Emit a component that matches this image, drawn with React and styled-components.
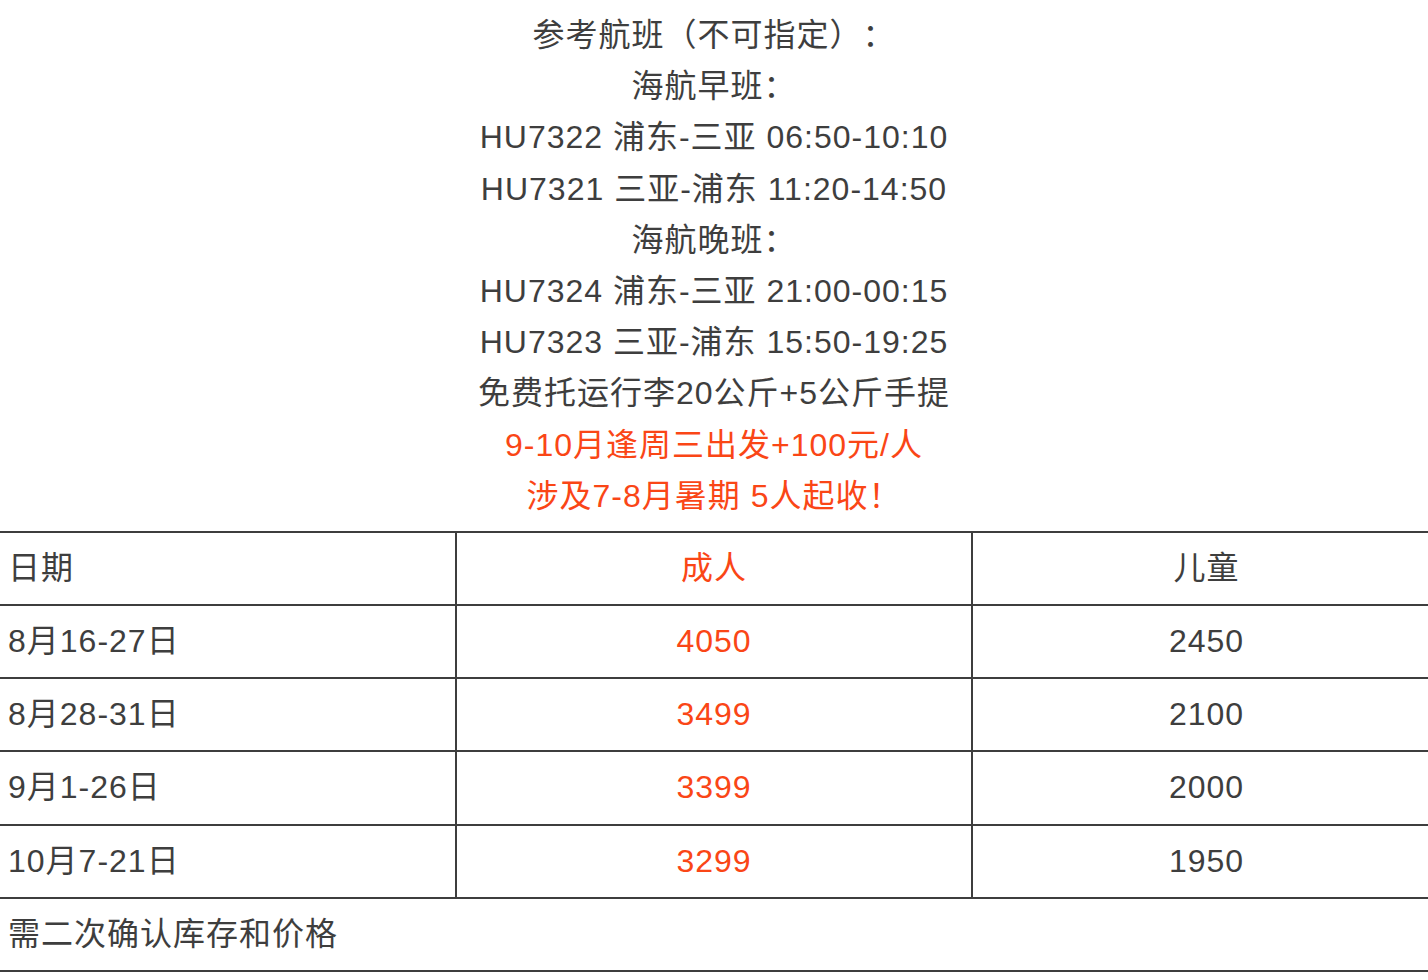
import React from "react";
import styled, { createGlobalStyle } from "styled-components";

const Global = createGlobalStyle`
  html, body { margin: 0; padding: 0; background: #fff; overflow-x: hidden; }
  body { font-family: "Liberation Sans", "Noto Sans CJK SC", sans-serif; color: #3e3e3e; }
`;

const Page = styled.div`
  padding-top: 10px;
  width: 1428px;
  overflow: hidden;
`;

const Notes = styled.div`
  text-align: center;
  font-size: 32px;
  line-height: 1.6;
  letter-spacing: 1px;
  text-spacing-trim: space-all;
  margin-bottom: 9px;
`;

const Line = styled.div`
  color: ${(p) => (p.$red ? "#fa4616" : "#3e3e3e")};
`;

const Table = styled.table`
  width: 1440px;
  border-collapse: collapse;
  font-size: 32px;
  line-height: 1.6;
  letter-spacing: 1px;
  table-layout: fixed;
`;

const Cell = styled.td`
  border-top: 2px solid #3e3e3e;
  border-bottom: 2px solid #3e3e3e;
  border-left: ${(p) => (p.$first ? "none" : "2px solid #3e3e3e")};
  border-right: ${(p) => (p.$last ? "none" : "2px solid #3e3e3e")};
  padding: 10px 8px;
  text-align: ${(p) => (p.$center ? "center" : "left")};
  color: ${(p) => (p.$red ? "#fa4616" : "#3e3e3e")};
  white-space: nowrap;
`;

const lines = [
  "参考航班（不可指定）：",
  "海航早班：",
  "HU7322 浦东-三亚 06:50-10:10",
  "HU7321 三亚-浦东 11:20-14:50",
  "海航晚班：",
  "HU7324 浦东-三亚 21:00-00:15",
  "HU7323 三亚-浦东 15:50-19:25",
  "免费托运行李20公斤+5公斤手提",
];

const rows = [
  ["8月16-27日", "4050", "2450"],
  ["8月28-31日", "3499", "2100"],
  ["9月1-26日", "3399", "2000"],
  ["10月7-21日", "3299", "1950"],
];

export default function App() {
  return (
    <Page>
      <Global />
      <Notes>
        {lines.map((l) => (
          <Line key={l}>{l}</Line>
        ))}
        <Line $red>9-10月逢周三出发+100元/人</Line>
        <Line $red>涉及7-8月暑期 5人起收！</Line>
      </Notes>
      <Table>
        <colgroup>
          <col style={{ width: 456 }} />
          <col style={{ width: 516 }} />
          <col style={{ width: 468 }} />
        </colgroup>
        <tbody>
          <tr>
            <Cell $first>日期</Cell>
            <Cell $center $red>成人</Cell>
            <Cell $center $last>儿童</Cell>
          </tr>
          {rows.map((r) => (
            <tr key={r[0]}>
              <Cell $first>{r[0]}</Cell>
              <Cell $center $red>{r[1]}</Cell>
              <Cell $center $last>{r[2]}</Cell>
            </tr>
          ))}
          <tr>
            <Cell $first $last colSpan={3}>需二次确认库存和价格</Cell>
          </tr>
        </tbody>
      </Table>
    </Page>
  );
}
